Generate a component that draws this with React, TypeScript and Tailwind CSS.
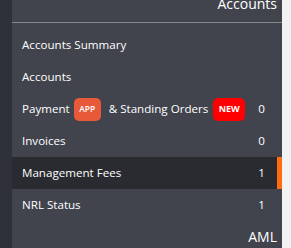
import React from 'react';

interface MenuRow {
  label: string;
  count?: number;
  active?: boolean;
  payment?: boolean;
}

const rows: MenuRow[] = [
  { label: 'Accounts Summary' },
  { label: 'Accounts' },
  { label: 'Payment', count: 0, payment: true },
  { label: 'Invoices', count: 0 },
  { label: 'Management Fees', count: 1, active: true },
  { label: 'NRL Status', count: 1 },
];

export default function App() {
  return (
    <div
      className="flex h-[248px] w-[291px] overflow-hidden bg-[#f2f2f2] text-white"
      style={{ fontFamily: '"Open Sans", "Noto Sans", sans-serif' }}
    >
      <div className="w-[12px] shrink-0 bg-[#2e3139]" />
      <div className="flex w-[270px] shrink-0 flex-col bg-[#41444d]">
        {/* Section header */}
        <div className="flex h-[23px] items-start justify-end border-b border-[#85878c] pr-[5px]">
          <span className="-mt-[6px] text-[14px] leading-[20px]">Accounts</span>
        </div>

        <div className="mt-[6px] flex flex-col">
          {rows.map((row) => (
            <div
              key={row.label}
              className={`relative flex h-[32px] items-center pl-[10px] pr-[17px] text-[11.6px] ${
                row.active ? 'bg-[#2a2b30]' : ''
              }`}
            >
              <div className="flex flex-1 items-center">
                <span>{row.label}</span>
                {row.payment && (
                  <>
                    <span className="ml-[4px] flex h-[23px] w-[27px] items-center justify-center rounded-[5px] bg-[#e8593a] text-[8.5px] font-semibold">
                      APP
                    </span>
                    <span className="ml-[8px]">&amp; Standing Orders</span>
                    <span className="ml-[5px] flex h-[23px] w-[32px] items-center justify-center rounded-[5px] bg-[#ff0000] text-[9px] font-bold">
                      NEW
                    </span>
                  </>
                )}
              </div>
              {row.count !== undefined && <span>{row.count}</span>}
              {row.active && <div className="absolute right-0 top-0 h-full w-[5px] bg-[#ff6a13]" />}
            </div>
          ))}
        </div>

        <div className="mt-[6px] flex justify-end pr-[5px]">
          <span className="text-[14px] leading-[20px]">AML</span>
        </div>
      </div>
    </div>
  );
}
